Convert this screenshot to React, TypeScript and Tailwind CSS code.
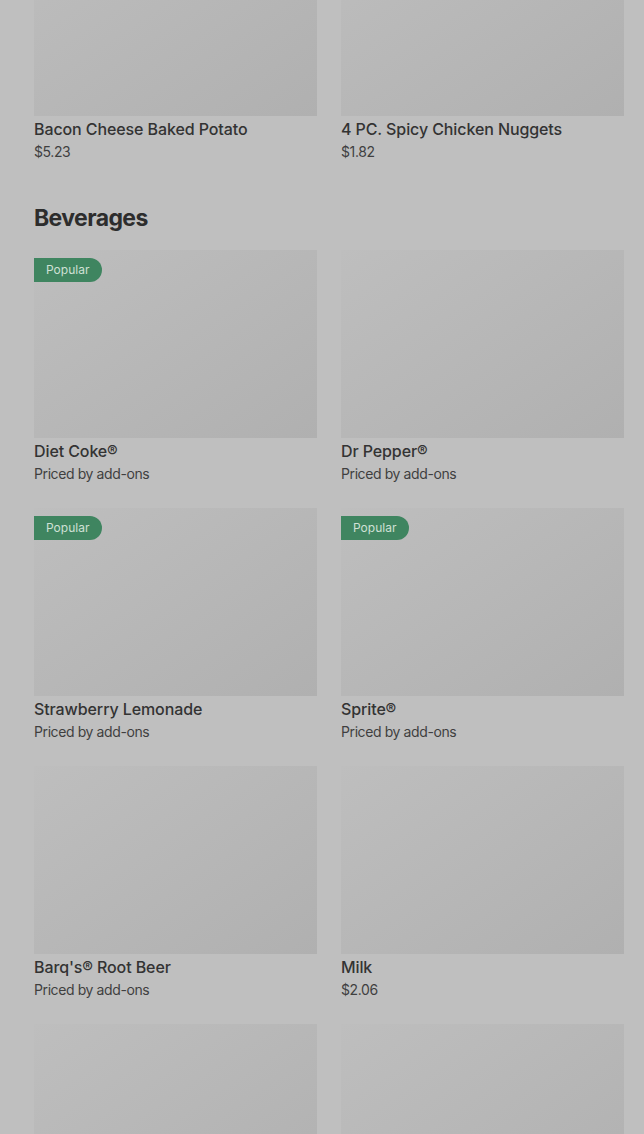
type Item = {
  name: string;
  price: string;
  popular?: boolean;
};

const TOP_ROW: Item[] = [
  { name: "Bacon Cheese Baked Potato", price: "$5.23" },
  { name: "4 PC. Spicy Chicken Nuggets", price: "$1.82" },
];

const BEVERAGES: Item[] = [
  { name: "Diet Coke®", price: "Priced by add-ons", popular: true },
  { name: "Dr Pepper®", price: "Priced by add-ons" },
  { name: "Strawberry Lemonade", price: "Priced by add-ons", popular: true },
  { name: "Sprite®", price: "Priced by add-ons", popular: true },
  { name: "Barq's® Root Beer", price: "Priced by add-ons" },
  { name: "Milk", price: "$2.06" },
  { name: "", price: "" },
  { name: "", price: "" },
];

function ItemCard({ item }: { item: Item }) {
  return (
    <div className="flex flex-col">
      <div className="relative h-[188px] bg-gradient-to-br from-[#bebebe] to-[#b0b0b0]">
        {item.popular && (
          <span className="absolute left-0 top-2 flex h-6 items-center rounded-r-full bg-[#3f8560] pl-3 pr-[13px] text-[12px] text-[#cfe0d5]">
            Popular
          </span>
        )}
      </div>
      {item.name && (
        <div className="flex h-[46px] flex-col pt-[1px]">
          <div className="text-[16px] font-medium leading-6 tracking-[-0.1px] text-[#333333]">
            {item.name}
          </div>
          <div className="mt-[1px] text-[14px] leading-5 tracking-[-0.4px] text-[#3f3f3f]">
            {item.price}
          </div>
        </div>
      )}
    </div>
  );
}

export default function App() {
  return (
    <div
      className="h-[1134px] overflow-hidden bg-[#bfbfbf] pl-[34px] pr-[20px]"
      style={{ fontFamily: "Inter, 'Noto Sans', sans-serif" }}
    >
      <div className="-mt-[72px] grid grid-cols-2 gap-x-6">
        {TOP_ROW.map((item) => (
          <ItemCard key={item.name} item={item} />
        ))}
      </div>
      <h2 className="mt-[40px] text-[23px] font-bold leading-8 tracking-[-0.6px] text-[#2d2d2d]">
        Beverages
      </h2>
      <div className="mt-4 grid grid-cols-2 gap-x-6 gap-y-6">
        {BEVERAGES.map((item, i) => (
          <ItemCard key={i} item={item} />
        ))}
      </div>
    </div>
  );
}
